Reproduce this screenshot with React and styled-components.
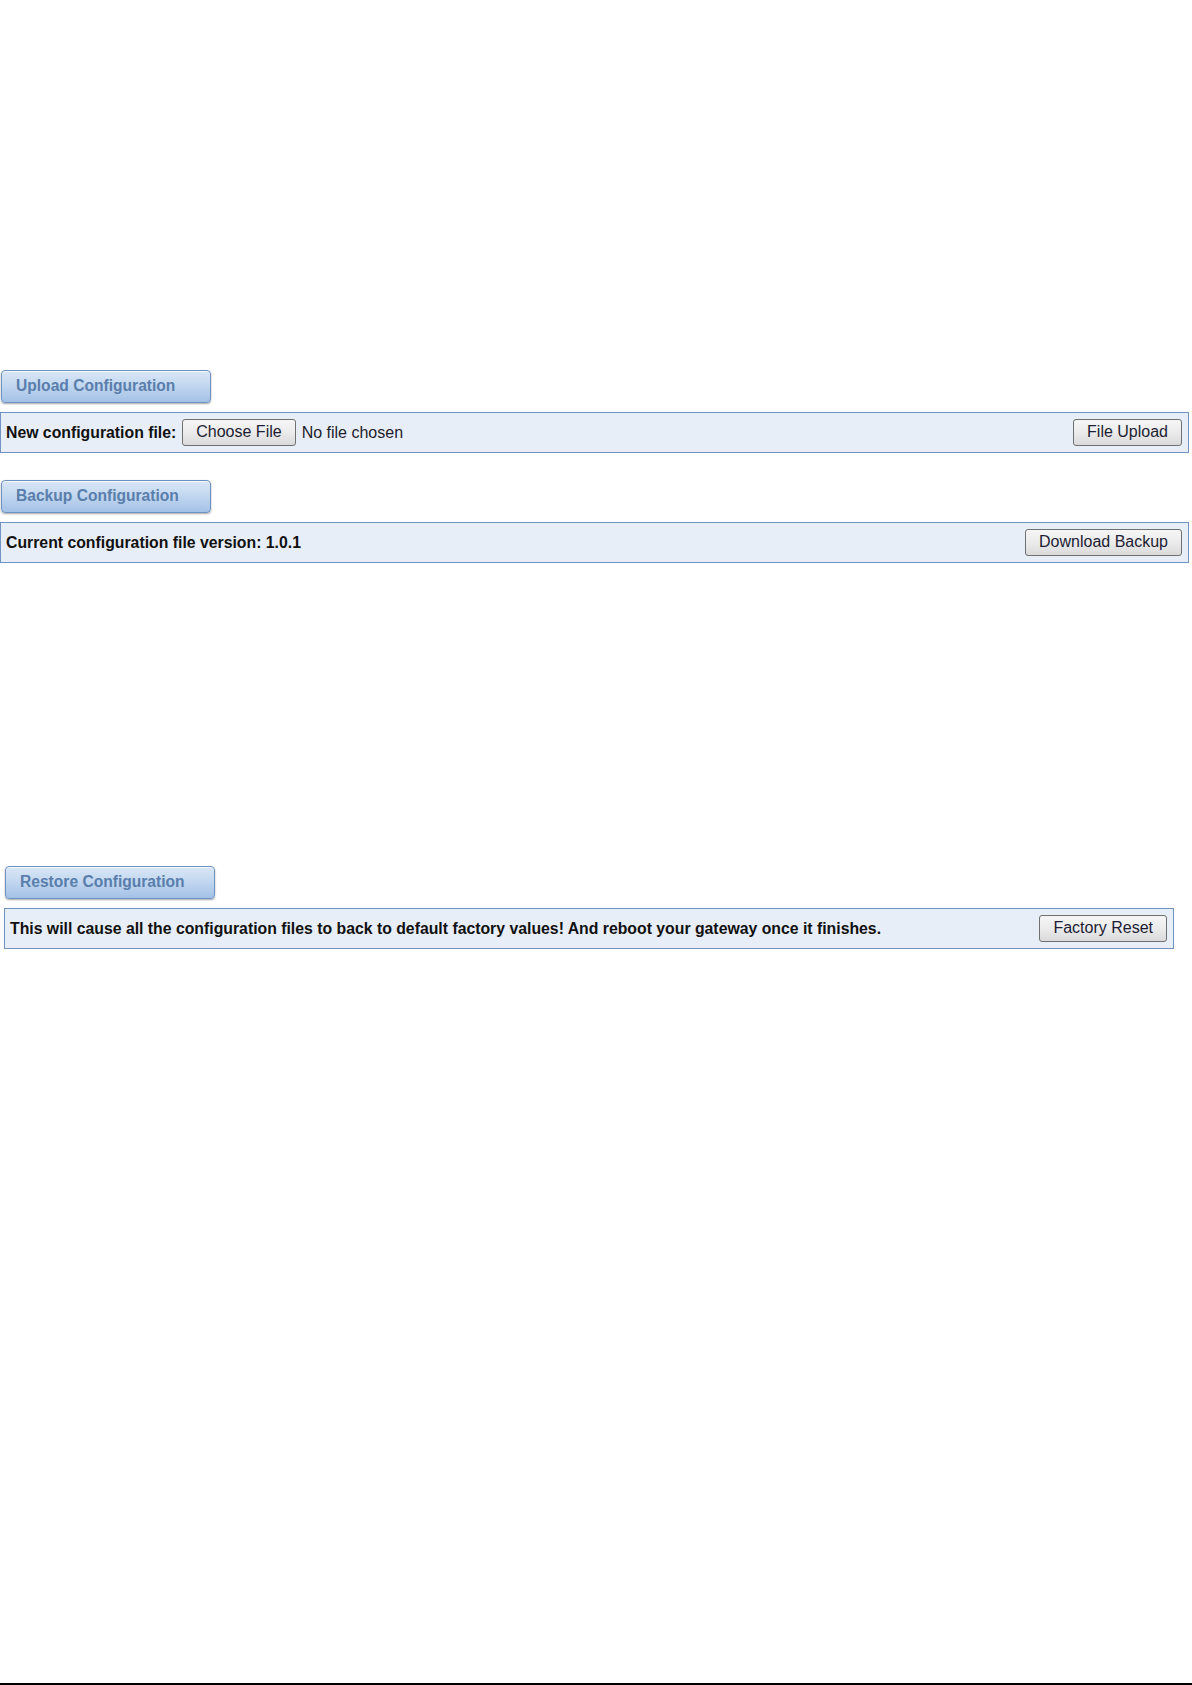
import React from "react";
import styled, { createGlobalStyle } from "styled-components";

const GlobalStyle = createGlobalStyle`
  html, body {
    margin: 0;
    padding: 0;
    background: #ffffff;
  }
  body {
    font-family: "Liberation Sans", Arial, sans-serif;
  }
  * {
    box-sizing: border-box;
  }
`;

const Page = styled.div`
  min-height: 100vh;
  display: flex;
  flex-direction: column;
`;

const Content = styled.div`
  flex: 1;
  padding-top: 370px;
`;

const Section = styled.section`
  margin-left: ${(p) => p.$left}px;
  width: ${(p) => p.$width}px;
  margin-top: ${(p) => p.$top}px;
`;

const HeadButton = styled.button`
  display: block;
  width: 210px;
  height: 33px;
  margin-left: 1px;
  padding: 0 0 1px 14px;
  text-align: left;
  font-family: "Liberation Sans", Arial, sans-serif;
  font-weight: bold;
  font-size: 15.6px;
  color: #5a7eab;
  border: 1px solid #6f93c0;
  border-radius: 4px;
  background: linear-gradient(#dae7f6 0%, #c3d8f0 45%, #a3c1e6 100%);
  box-shadow: 0 1px 2px rgba(0, 0, 0, 0.35), inset 0 1px 0 rgba(255, 255, 255, 0.7);
  cursor: pointer;
`;

const Panel = styled.div`
  margin-top: 9px;
  height: 41px;
  display: flex;
  align-items: center;
  gap: 6px;
  padding: 0 6px 0 5px;
  border: 1px solid #7093c4;
  background: #e8eef7;
`;

const Label = styled.span`
  font-weight: bold;
  font-size: 15.8px;
  color: #111111;
`;

const Plain = styled.span`
  font-size: 16px;
  color: #1d1d2c;
`;

const Spacer = styled.div`
  flex: 1;
`;

const NativeButton = styled.button`
  height: 27px;
  padding: 0 13px 1px;
  font-family: "Liberation Sans", Arial, sans-serif;
  font-size: 16px;
  color: #1d1d33;
  border: 1px solid #707070;
  border-radius: 3px;
  background: linear-gradient(#f6f6f6 0%, #ebebeb 50%, #dadada 100%);
  cursor: pointer;
`;

const Footer = styled.div`
  height: 2px;
  background: #000000;
`;

const App = () => {
  return (
    <Page>
      <GlobalStyle />
      <Content>
        <Section $left={0} $width={1189} $top={0}>
          <HeadButton>Upload Configuration</HeadButton>
          <Panel>
            <Label>New configuration file:</Label>
            <NativeButton>Choose File</NativeButton>
            <Plain>No file chosen</Plain>
            <Spacer />
            <NativeButton>File Upload</NativeButton>
          </Panel>
        </Section>

        <Section $left={0} $width={1189} $top={27}>
          <HeadButton>Backup Configuration</HeadButton>
          <Panel>
            <Label>Current configuration file version: 1.0.1</Label>
            <Spacer />
            <NativeButton>Download Backup</NativeButton>
          </Panel>
        </Section>

        <Section $left={4} $width={1170} $top={303}>
          <HeadButton>Restore Configuration</HeadButton>
          <Panel>
            <Label>
              This will cause all the configuration files to back to default factory values! And reboot your gateway once it finishes.
            </Label>
            <Spacer />
            <NativeButton>Factory Reset</NativeButton>
          </Panel>
        </Section>
      </Content>
      <Footer />
    </Page>
  );
};

export default App;
